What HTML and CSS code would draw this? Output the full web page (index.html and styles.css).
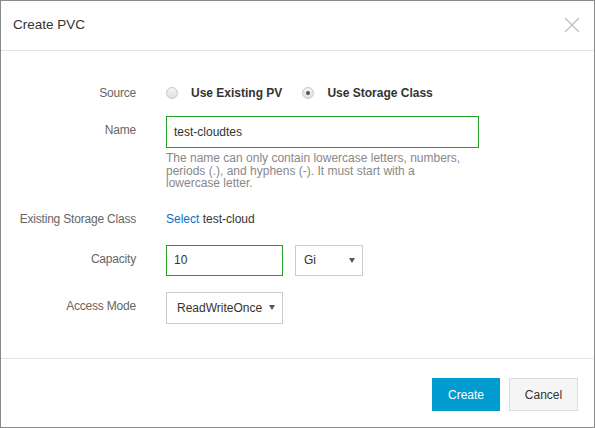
FILE: index.html
```html
<!DOCTYPE html>
<html lang="en">
<head>
<meta charset="utf-8">
<title>Create PVC</title>
<link rel="stylesheet" href="styles.css">
</head>
<body>
<div class="dialog">
  <div class="header">
    <span class="title">Create PVC</span>
    <button class="close" aria-label="Close">
      <svg width="16" height="16" viewBox="0 0 16 16"><path d="M1 1 L15 15 M15 1 L1 15" stroke="#c4c4c4" stroke-width="1.5" fill="none"/></svg>
    </button>
  </div>
  <div class="body">
    <div class="row row-source">
      <div class="label">Source</div>
      <div class="field radios">
        <label class="radio"><span class="dot"></span><span class="radio-text">Use Existing PV</span></label>
        <label class="radio checked"><span class="dot"></span><span class="radio-text">Use Storage Class</span></label>
      </div>
    </div>
    <div class="row row-name">
      <div class="label label-input">Name</div>
      <div class="field">
        <div class="input input-name">test-cloudtes</div>
        <div class="help">The name can only contain lowercase letters, numbers, periods (.), and hyphens (-). It must start with a lowercase letter.</div>
      </div>
    </div>
    <div class="row row-class">
      <div class="label">Existing Storage Class</div>
      <div class="field plain"><a class="link">Select</a> test-cloud</div>
    </div>
    <div class="row row-capacity">
      <div class="label label-input">Capacity</div>
      <div class="field inline">
        <div class="input input-cap">10</div>
        <div class="select select-unit"><span>Gi</span><svg class="arrow" width="6" height="5" viewBox="0 0 6 5"><path d="M0 0 H6 L3 5 Z" fill="#555"/></svg></div>
      </div>
    </div>
    <div class="row row-access">
      <div class="label label-input">Access Mode</div>
      <div class="field">
        <div class="select select-mode"><span>ReadWriteOnce</span><svg class="arrow" width="6" height="5" viewBox="0 0 6 5"><path d="M0 0 H6 L3 5 Z" fill="#555"/></svg></div>
      </div>
    </div>
  </div>
  <div class="footer">
    <button class="btn btn-primary">Create</button>
    <button class="btn btn-default">Cancel</button>
  </div>
</div>
</body>
</html>
```
FILE: styles.css
```css
* { box-sizing: border-box; }
html, body { margin: 0; padding: 0; background: #fff; }
body { font-family: "Liberation Sans", Arial, sans-serif; font-size: 12px; color: #333; }

.dialog {
  width: 595px;
  height: 428px;
  border: 1px solid #8a8a8a;
  display: flex;
  flex-direction: column;
  background: #fff;
}

.header {
  height: 50px;
  border-bottom: 1px solid #e5e5e5;
  display: flex;
  align-items: center;
  justify-content: space-between;
  padding: 0 14px 2px 12px;
}
.title { font-size: 13.5px; color: #333; }
.close {
  border: 0;
  background: transparent;
  padding: 0;
  width: 16px;
  height: 16px;
  display: flex;
  cursor: pointer;
}

.body {
  height: 308px;
  padding-top: 32px;
  border-bottom: 1px solid #e5e5e5;
  display: flex;
  flex-direction: column;
}

.row {
  display: grid;
  grid-template-columns: 135px 1fr;
  column-gap: 30px;
  align-items: start;
}
.label {
  text-align: right;
  color: #666;
  line-height: 20px;
  letter-spacing: -0.2px;
}
.label-input { line-height: 28px; }

.row-name { margin-top: 13px; }
.row-class { margin-top: 19px; }
.row-capacity { margin-top: 16px; }
.row-access { margin-top: 16px; }

.radios { display: flex; align-items: center; height: 20px; gap: 20px; }
.radio { display: flex; align-items: center; gap: 13px; font-weight: bold; color: #333; }
.dot {
  width: 12px;
  height: 12px;
  border-radius: 50%;
  border: 1px solid #c6c6c6;
  background: linear-gradient(#f4f4f4, #e0e0e0);
  display: flex;
  align-items: center;
  justify-content: center;
}
.radio.checked .dot::after {
  content: "";
  width: 4px;
  height: 4px;
  border-radius: 50%;
  background: #555;
}

.input {
  border: 1px solid #23a023;
  color: #333;
  display: flex;
  align-items: center;
  padding-left: 7px;
}
.input-name { width: 313px; height: 32px; }
.input-cap { width: 117px; height: 31px; }

.help {
  width: 300px;
  margin-top: 4px;
  color: #888;
  line-height: 12.5px;
}

.plain { line-height: 20px; color: #333; }
.link { color: #0a70c9; text-decoration: none; }

.inline { display: flex; gap: 12px; }

.select {
  border: 1px solid #ccc;
  display: flex;
  align-items: center;
  justify-content: space-between;
  color: #333;
}
.select-unit { width: 68px; height: 31px; padding: 0 7px 0 8px; }
.select-mode { width: 117px; height: 32px; padding: 0 7px 0 10px; }
.arrow { flex: none; }

.footer {
  flex: 1;
  display: flex;
  justify-content: flex-end;
  align-items: flex-start;
  gap: 9px;
  padding: 19px 16px 0 0;
}
.btn {
  height: 33px;
  width: 69px;
  font-family: "Liberation Sans", Arial, sans-serif;
  font-size: 12px;
  cursor: pointer;
  padding: 0;
}
.btn-primary { background: #009ccf; border: 1px solid #009ccf; color: #fff; width: 68px; }
.btn-default { background: #f5f5f5; border: 1px solid #dcdcdc; color: #333; }
```
